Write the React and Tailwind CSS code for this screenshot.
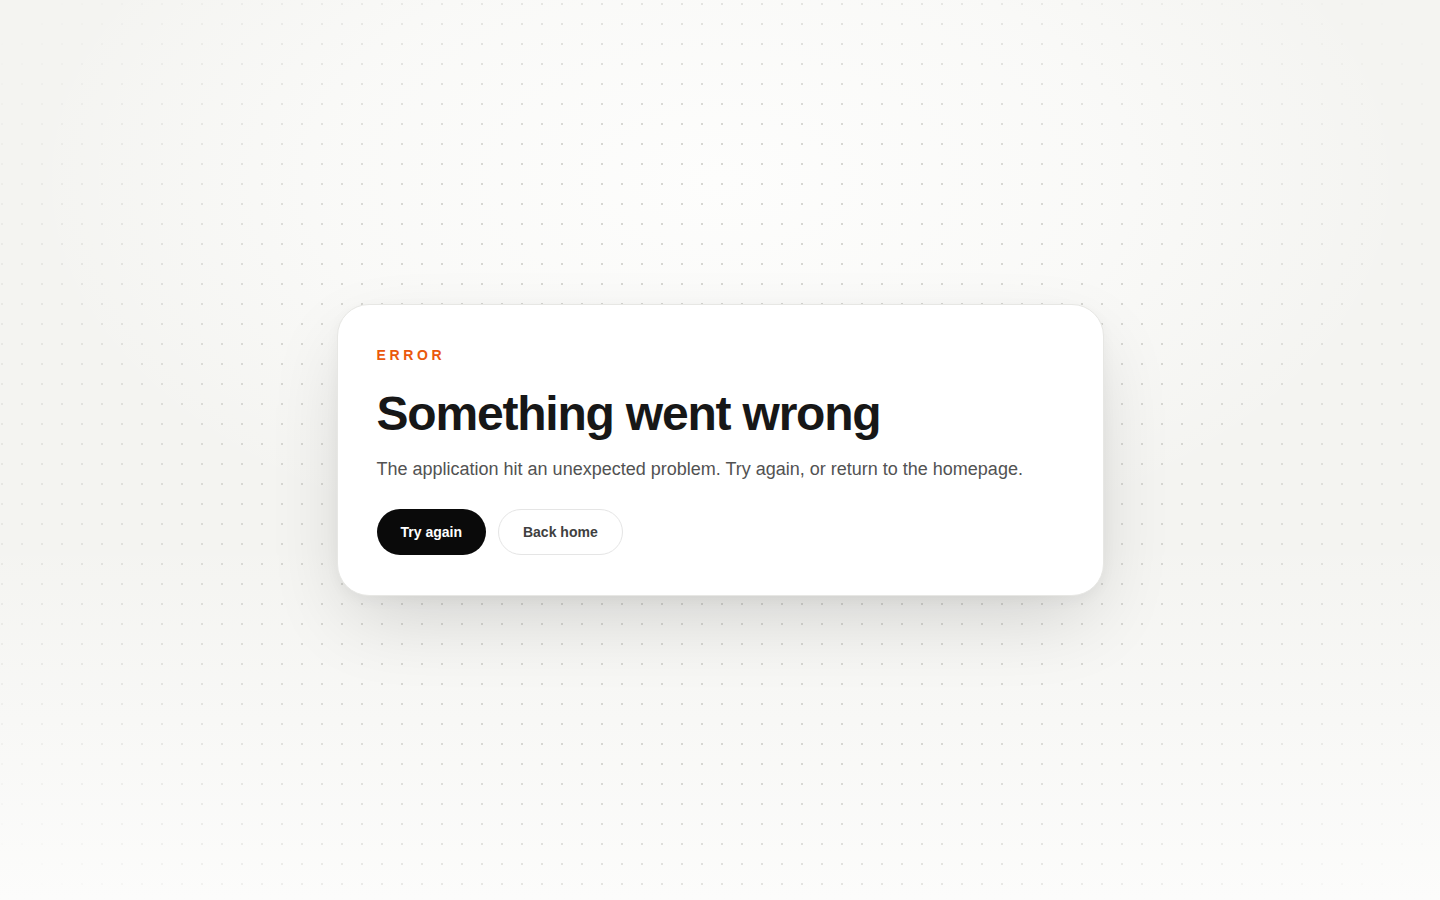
export default function App() {
  return (
    <div className="relative min-h-screen w-full overflow-hidden bg-[#f4f4f1] font-['Liberation_Sans',Arial,sans-serif]">
      {/* soft glow */}
      <div className="pointer-events-none absolute inset-0 bg-[radial-gradient(ellipse_60%_55%_at_50%_20%,#fdfdfc_0%,rgba(253,253,252,0.6)_45%,transparent_80%)]" />
      <div className="pointer-events-none absolute inset-0 bg-[linear-gradient(to_bottom,transparent_60%,#fcfcfb_100%)]" />
      {/* dot grid */}
      <div className="pointer-events-none absolute inset-0 bg-[radial-gradient(circle,#d6d6d2_1px,transparent_1.5px)] bg-[size:20px_20px] bg-[position:-8px_-6px] [mask-image:radial-gradient(ellipse_72%_80%_at_50%_50%,black_45%,transparent_90%)]" />

      <main className="relative flex min-h-screen items-center justify-center">
        <div className="w-[767px] rounded-[32px] border border-[#e7e7e4] bg-white py-10 pl-[39px] pr-10 shadow-[0_30px_80px_-14px_rgba(0,0,0,0.16),0_4px_14px_rgba(0,0,0,0.04)]">
          <p className="text-sm font-bold uppercase leading-5 tracking-[0.26em] text-[#ea580c]">
            Error
          </p>
          <h1 className="mt-[25px] text-[48px] font-bold leading-none tracking-[-0.025em] text-[#171717]">
            Something went wrong
          </h1>
          <p className="mt-[17px] text-lg leading-7 text-[#525252]">
            The application hit an unexpected problem. Try again, or return to the homepage.
          </p>
          <div className="mt-[26px] flex items-center gap-3">
            <button className="h-[46px] rounded-full bg-[#0a0a0a] px-6 text-sm font-bold text-white">
              Try again
            </button>
            <button className="h-[46px] rounded-full border border-[#e5e5e5] bg-white px-6 text-sm font-bold text-[#404040]">
              Back home
            </button>
          </div>
        </div>
      </main>
    </div>
  );
}
